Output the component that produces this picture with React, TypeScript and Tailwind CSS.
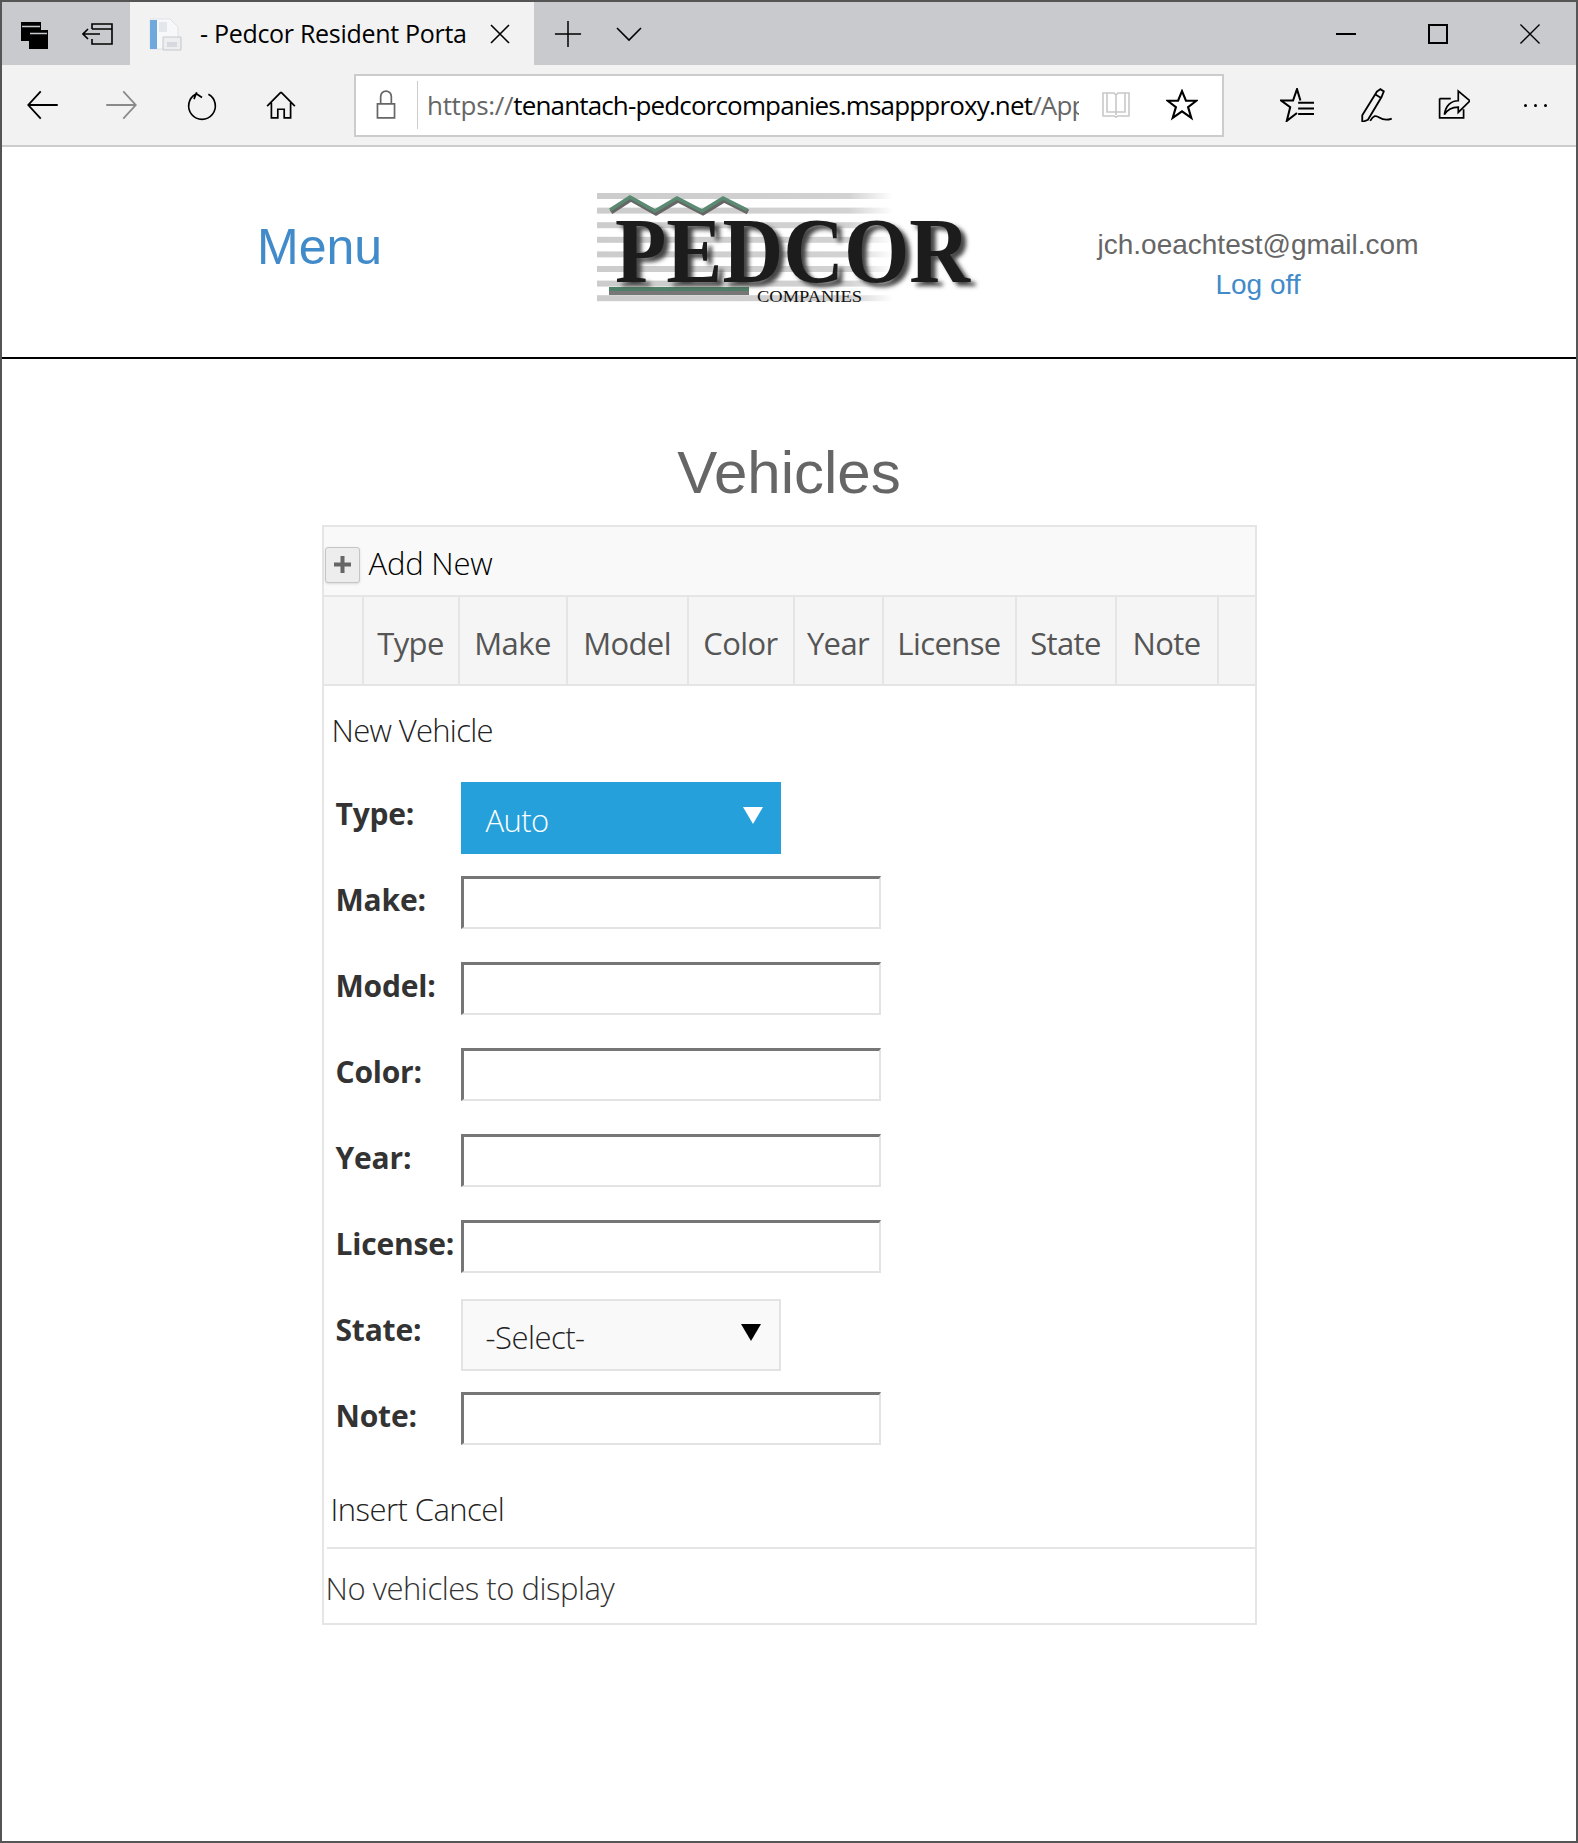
import React from 'react';

const SEGOE = "font-['Open_Sans',sans-serif]";

const columns = [
  { label: '', width: 'w-[40px]' },
  { label: 'Type', width: 'w-[96px]' },
  { label: 'Make', width: 'w-[108px]' },
  { label: 'Model', width: 'w-[121px]' },
  { label: 'Color', width: 'w-[106px]' },
  { label: 'Year', width: 'w-[89px]' },
  { label: 'License', width: 'w-[133px]' },
  { label: 'State', width: 'w-[100px]' },
  { label: 'Note', width: 'w-[102px]' },
];

const TabsAsideIcon = () => (
  <svg width="30" height="30" viewBox="0 0 30 30" fill="#000">
    <path d="M2 3h20v8h7v19H10v-8H2z" />
    <path d="M3 7.500h18M11 14.500h17" stroke="#c8cace" strokeWidth="1.500" />
  </svg>
);

const SetAsideIcon = () => (
  <svg width="32" height="24" viewBox="0 0 32 24" fill="none" stroke="#000" strokeWidth="1.600">
    <path d="M10 7V2h20v20H10v-5" />
    <path d="M10 7h20M1 12h17M6 7l-5 5 5 5" />
  </svg>
);

const PageIcon = () => (
  <svg width="34" height="34" viewBox="0 0 34 34">
    <path d="M2 2h20l8 8v22H2z" fill="#f7f8fa" stroke="#dfe2e6" />
    <path d="M2 3h7v29H2z" fill="#6fa8dc" />
    <path d="M11 5h8v10h-8z" fill="#e3e6ea" />
    <path d="M15 20h18v13H15z" fill="#eceef0" stroke="#c5c8cc" />
    <path d="M19 25h10v5H19z" fill="#d6dade" />
  </svg>
);

const Line = ({ d, size = 30, color = '#000', sw = 1.6 }: { d: string; size?: number; color?: string; sw?: number }) => (
  <svg width={size} height={size} viewBox="0 0 30 30" fill="none" stroke={color} strokeWidth={sw}>
    <path d={d} />
  </svg>
);

const Logo = () => (
  <svg width="400" height="120" viewBox="0 0 400 120">
    <defs>
      <linearGradient id="fade" x1="0" x2="1" y1="0" y2="0">
        <stop offset="0" stopColor="#cccccc" />
        <stop offset="0.85" stopColor="#d2d2d2" />
        <stop offset="1" stopColor="#ffffff" />
      </linearGradient>
      <filter id="soft" x="-5%" y="-5%" width="110%" height="115%">
        <feGaussianBlur stdDeviation="2" />
      </filter>
    </defs>
    {[0, 14.6, 29.2, 43.8, 58.4, 73, 87.6, 102.2].map((y) => (
      <rect key={y} x="0" y={y} width="296" height="6" fill="url(#fade)" />
    ))}
    <path d="M13 17 L33 4 L58 18 L80 5 L105 18 L126 5 L150 17" fill="none" stroke="#666" strokeWidth="5" transform="translate(1,2)" />
    <path d="M13 17 L33 4 L58 18 L80 5 L105 18 L126 5 L150 17" fill="none" stroke="#5b8a72" strokeWidth="3.500" />
    <rect x="12" y="98" width="140" height="4" fill="#777" />
    <rect x="12" y="94" width="140" height="4" fill="#4f8069" />
    <text x="18" y="89" fontFamily="'Liberation Serif', serif" fontWeight="700" fontSize="94" textLength="355" lengthAdjust="spacingAndGlyphs" fill="#444" transform="translate(5,4)" filter="url(#soft)">PEDCOR</text>
    <text x="18" y="89" fontFamily="'Liberation Serif', serif" fontWeight="700" fontSize="94" textLength="355" lengthAdjust="spacingAndGlyphs" fill="#1c1c1c">PEDCOR</text>
    <text x="160" y="109" fontFamily="'Liberation Serif', serif" fontSize="17" textLength="105" lengthAdjust="spacingAndGlyphs" fill="#111">COMPANIES</text>
  </svg>
);

const TextBox = () => (
  <div className="h-[53px] w-[420px] border-2 border-[#e3e3e3] border-t-[3px] border-l-[3px] border-t-[#767676] border-l-[#767676] bg-white" />
);

const Label = ({ children }: { children: React.ReactNode }) => (
  <div className={`w-[137px] shrink-0 pl-[12px] text-[30px] font-bold leading-[40px] tracking-[-0.2px] text-[#333] ${SEGOE}`}>{children}</div>
);

const DropDown = ({ value, active }: { value: string; active?: boolean }) => (
  <div
    className={`flex h-[72px] w-[320px] items-center justify-between pr-[18px] text-[31px] font-light ${SEGOE} ${
      active ? 'bg-[#26a0da] pl-[25px] tracking-[-0.6px] text-white' : 'border-2 border-[#e3e3e3] bg-[#f9f9f9] pl-[23px] tracking-[-0.5px] text-[#222]'
    }`}
  >
    <span className="pt-[4px]">{value}</span>
    <svg width="20" height="17" viewBox="0 0 20 17" className="mb-[6px]" fill={active ? '#fff' : '#000'}>
      <path d="M0 0h20L10 17z" />
    </svg>
  </div>
);

const FormRow = ({ label, children, labelTop }: { label: string; children: React.ReactNode; labelTop: string }) => (
  <div className="flex">
    <div className={labelTop}>
      <Label>{label}</Label>
    </div>
    {children}
  </div>
);

export default function App() {
  return (
    <div className="flex h-[1843px] w-[1578px] flex-col overflow-hidden border-x-2 border-b-2 border-x-[#555] border-b-[#555] bg-white">
      {/* Browser chrome */}
      <div className={`flex h-[65px] shrink-0 items-center border-t-2 border-[#555] bg-[#c8cace] ${SEGOE}`}>
        <div className="flex w-[128px] items-center pl-[17px]">
          <TabsAsideIcon />
          <div className="ml-[33px]">
            <SetAsideIcon />
          </div>
        </div>
        <div className="flex h-full w-[404px] items-center bg-[#f2f2f2] pl-[18px]">
          <PageIcon />
          <span className="ml-[18px] w-[274px] overflow-hidden whitespace-nowrap text-[25px] tracking-[-0.3px] text-black">- Pedcor Resident Porta</span>
          <div className="ml-[11px]">
            <Line d="M6 6l18 18M24 6L6 24" />
          </div>
        </div>
        <div className="ml-[20px]">
          <Line size={28} d="M15 1v28M1 15h28" />
        </div>
        <div className="ml-[32px]">
          <Line size={30} d="M3 9l12 12L27 9" />
        </div>
        <div className="ml-auto flex items-center pr-[35px]">
          <div className="h-[2px] w-[20px] bg-black" />
          <div className="ml-[72px] h-[20px] w-[20px] border-2 border-black" />
          <div className="ml-[71px]">
            <Line size={22} sw={1.8} d="M2 2l26 26M28 2L2 28" />
          </div>
        </div>
      </div>
      <div className="flex h-[82px] shrink-0 items-center border-b-2 border-[#ccc] bg-[#f2f2f2]">
        <div className="ml-[24px]">
          <Line size={34} d="M2 15h26M13 3L2 15l11 12" />
        </div>
        <div className="ml-[44px]">
          <Line size={34} color="#8a8a8a" d="M2 15h26M17 3l11 12-11 12" />
        </div>
        <div className="ml-[48px]">
          <Line size={32} d="M9 4l6 4M10 3L7.500 9.500M9 5a12.500 12.500 0 1 0 12 0" />
        </div>
        <div className="ml-[47px]">
          <Line size={32} d="M15 3L2 16M15 3l13 13M6 13v14h6v-8h6v8h6V13" />
        </div>
        <div className={`ml-[57px] flex h-[63px] w-[870px] items-center border-2 border-[#ccc] bg-white ${SEGOE}`}>
          <div className="ml-[14px]">
            <Line size={32} color="#666" d="M7 14h16v13H7zM10 14V7a5 5 0 0 1 10 0v7" />
          </div>
          <div className="ml-[15px] h-[48px] w-[1px] bg-[#ccc]" />
          <div className="ml-[9px] w-[652px] overflow-hidden whitespace-nowrap text-[26px] tracking-[-0.85px] text-black">
            <span className="tracking-[-0.3px] text-[#666]">https://</span>tenantach-pedcorcompanies.msappproxy.net<span className="text-[#666]">/App</span>
          </div>
          <div className="ml-[22px]">
            <Line size={30} color="#c8c8c8" d="M2 3h11l2 2 2-2h11v23H17l-2 1-2-1H2zM6 3v19h9M24 3v19h-9M15 5v20" />
          </div>
          <div className="ml-[35px]">
            <Line size={32} sw={2} d="M15 2l3.700 9h9.800l-7.800 6 3 10-8.700-6-8.700 6 3-10-7.800-6h9.800z" />
          </div>
        </div>
        <div className="ml-[56px]">
          <Line size={34} sw={1.8} d="M18 11 15 1l-3.500 10H1l8 6-3 12 9-7M16 13h14M16 18h14M16 23h14" />
        </div>
        <div className="ml-[46px]">
          <Line size={34} d="M15 3l3-2 3 2-2 5-12 20-5 2 0-6zM14 6l5 3M9 29c3-5 5-5 8-3s6 3 11 1" />
        </div>
        <div className="ml-[44px]">
          <Line size={32} d="M1.500 9v18H24v-8M1.500 9H12M6 24C7 16 12 11 19 11V2l11 9-11 11v-5C13 17 9 19 6 24z" />
        </div>
        <div className="ml-[54px] flex gap-[7px]">
          <div className="size-[3px] rounded-full bg-black" />
          <div className="size-[3px] rounded-full bg-black" />
          <div className="size-[3px] rounded-full bg-black" />
        </div>
      </div>

      {/* Site header */}
      <div className="flex h-[212px] shrink-0 items-center border-b-2 border-black font-['Liberation_Sans',sans-serif]">
        <div className="ml-[255px] w-[340px] pb-[10px] text-[50px] leading-none text-[#428bca]">Menu</div>
        <div className="pt-[2px]">
          <Logo />
        </div>
        <div className="ml-[99px] w-[324px] pt-[26px] text-center text-[28px] leading-[40px]">
          <div className="text-[#666]">jch.oeachtest@gmail.com</div>
          <div className="text-[#428bca]">Log off</div>
        </div>
      </div>

      {/* Content */}
      <div className="flex flex-1 flex-col items-center">
        <h1 className="mt-[81px] h-[66px] text-[60px] leading-[66px] text-[#666] font-['Liberation_Sans',sans-serif]">Vehicles</h1>
        <div className={`mt-[19px] w-[935px] border-2 border-[#e5e5e5] ${SEGOE}`}>
          <div className="flex h-[70px] items-center border-b-2 border-[#e5e5e5] bg-[#f9f9f9] pt-[4px]">
            <div className="ml-[1px] mt-[3px] flex h-[36px] w-[35px] items-center justify-center rounded-[3px] border border-[#c5c5c5] bg-[#ededed] shadow-sm">
              <svg width="17" height="17" viewBox="0 0 17 17" fill="#666">
                <path d="M6.500 0h4v6.500H17v4h-6.500V17h-4v-6.500H0v-4h6.500z" />
              </svg>
            </div>
            <span className="ml-[9px] text-[31px] font-light tracking-[-0.2px] text-black">Add New</span>
          </div>
          <div className="flex h-[89px] border-b-2 border-[#e5e5e5] bg-[#f5f5f5]">
            {columns.map((col) => (
              <div
                key={col.label}
                className={`flex ${col.width} shrink-0 items-center justify-center border-r-2 border-[#e5e5e5] pt-[6px] text-[31px] font-normal tracking-[-0.6px] text-[#555]`}
              >
                {col.label}
              </div>
            ))}
          </div>
          <div className="pt-[24px]">
            <div className="pl-[8px] text-[31px] font-light leading-[40px] tracking-[-0.67px] text-[#222]">New Vehicle</div>
            <div className="mt-[32px] flex flex-col gap-[22px]">
              <FormRow label="Type:" labelTop="pt-[12px]">
                <DropDown value="Auto" active />
              </FormRow>
              <FormRow label="Make:" labelTop="pt-[4px]">
                <TextBox />
              </FormRow>
            </div>
            <div className="mt-[33px] flex flex-col gap-[33px]">
              <FormRow label="Model:" labelTop="pt-[4px]">
                <TextBox />
              </FormRow>
              <FormRow label="Color:" labelTop="pt-[4px]">
                <TextBox />
              </FormRow>
              <FormRow label="Year:" labelTop="pt-[4px]">
                <TextBox />
              </FormRow>
              <FormRow label="License:" labelTop="pt-[4px]">
                <TextBox />
              </FormRow>
            </div>
            <div className="mt-[26px] flex flex-col gap-[21px]">
              <FormRow label="State:" labelTop="pt-[11px]">
                <DropDown value="-Select-" />
              </FormRow>
              <FormRow label="Note:" labelTop="pt-[4px]">
                <TextBox />
              </FormRow>
            </div>
            <div className="mt-[44px] pl-[7px] text-[31px] font-light leading-[40px] tracking-[-0.55px] text-[#222]">Insert Cancel</div>
            <div className="ml-[3px] mt-[18px] h-[2px] bg-[#e5e5e5]" />
            <div className="flex h-[74px] items-center pl-[2px] pt-[4px] text-[31px] font-light tracking-[-0.47px] text-[#333]">No vehicles to display</div>
          </div>
        </div>
      </div>
    </div>
  );
}
